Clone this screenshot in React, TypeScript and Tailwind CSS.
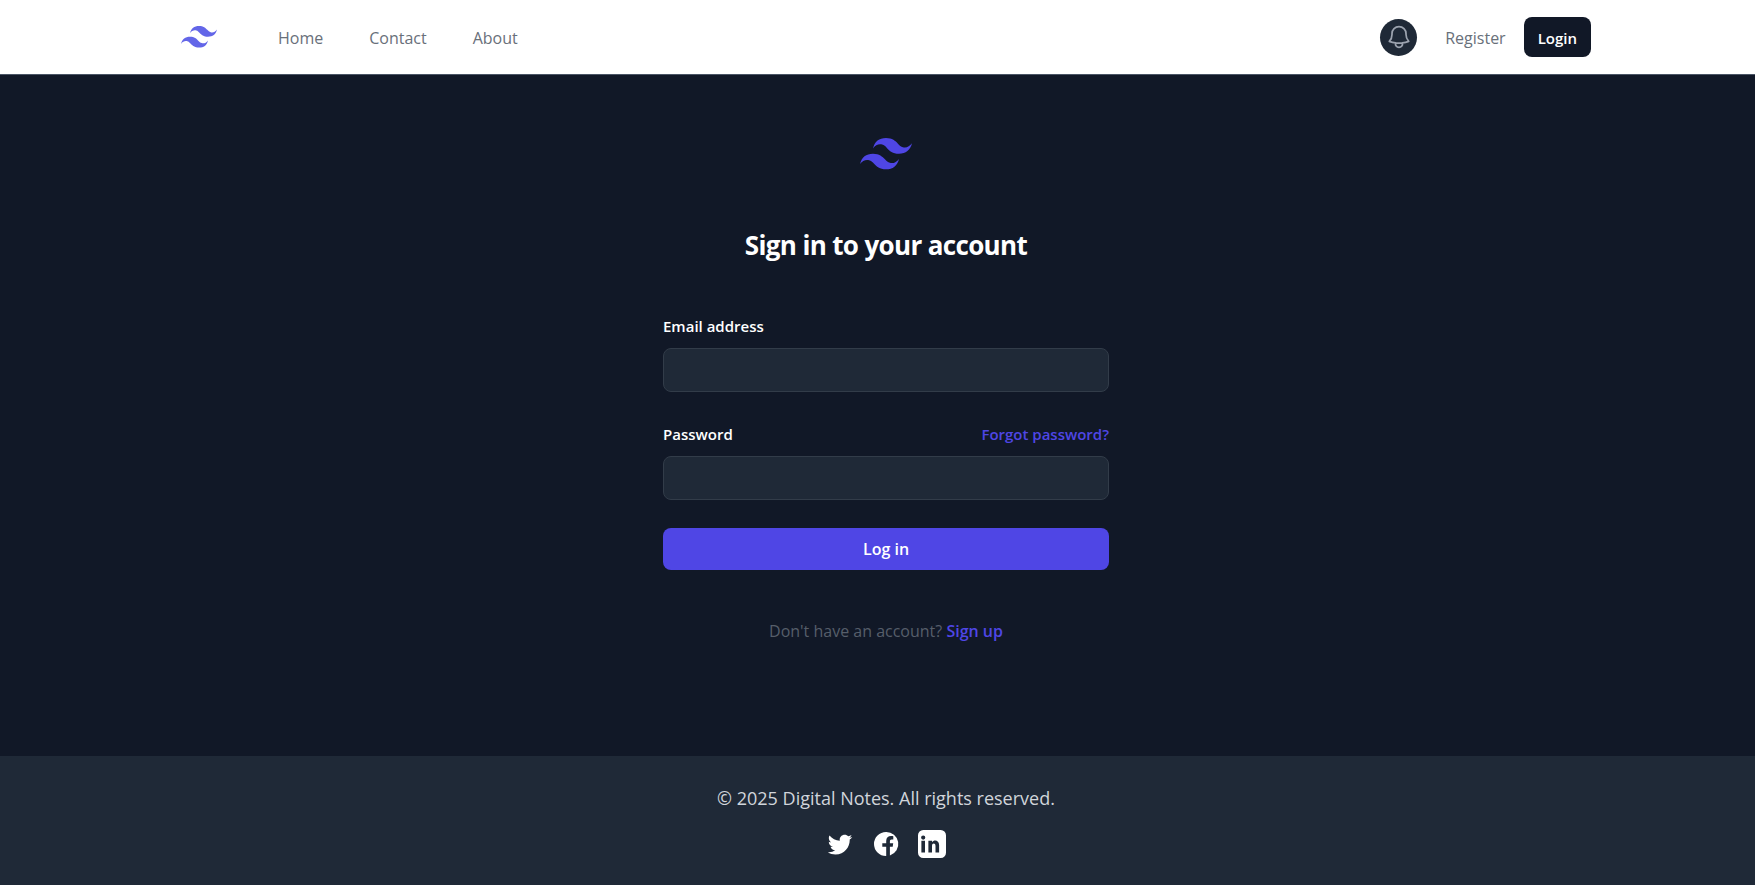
const MARK =
  'M27 0c-7.2 0-11.7 3.6-13.5 10.8 2.7-3.6 5.85-4.95 9.45-4.05 2.054.513 3.522 2.004 5.147 3.653C30.744 13.09 33.808 16.2 40.5 16.2c7.2 0 11.7-3.6 13.5-10.8-2.7 3.6-5.85 4.95-9.45 4.05-2.054-.513-3.522-2.004-5.147-3.653C36.756 3.11 33.692 0 27 0zM13.5 16.2C6.3 16.2 1.8 19.8 0 27c2.7-3.6 5.85-4.95 9.45-4.05 2.054.514 3.522 2.004 5.147 3.653C17.244 29.29 20.308 32.4 27 32.4c7.2 0 11.7-3.6 13.5-10.8-2.7 3.6-5.85 4.95-9.45 4.05-2.054-.513-3.522-2.004-5.147-3.653C23.256 19.31 20.192 16.2 13.5 16.2z';

function Mark({ className }: { className: string }) {
  return (
    <svg viewBox="0 0 54 33" fill="currentColor" className={className} aria-hidden="true">
      <path fillRule="evenodd" clipRule="evenodd" d={MARK} />
    </svg>
  );
}

function Header() {
  return (
    <header className="border-b border-gray-600 bg-white pl-[17px]">
      <div className="mx-auto flex h-[74px] max-w-[1410px] items-center justify-between">
        <div className="flex items-center gap-[61px]">
          <a href="#" aria-label="Digital Notes">
            <Mark className="h-[22px] w-9 text-[#6366e8]" />
          </a>
          <nav className="flex gap-[46px] pt-0.5 text-base text-[#69707a]">
            <a href="#">Home</a>
            <a href="#">Contact</a>
            <a href="#">About</a>
          </nav>
        </div>
        <div className="flex items-center text-base">
          <button
            type="button"
            aria-label="View notifications"
            className="mr-7 flex size-[37px] items-center justify-center rounded-full bg-[#1f2937] text-[#9ca3af]"
          >
            <svg viewBox="0 0 24 24" fill="none" stroke="currentColor" strokeWidth="1.5" strokeLinecap="round" strokeLinejoin="round" className="size-7" aria-hidden="true">
              <path d="M14.857 17.082a23.848 23.848 0 0 0 5.454-1.31A8.967 8.967 0 0 1 18 9.75V9A6 6 0 0 0 6 9v.75a8.967 8.967 0 0 1-2.312 6.022c1.733.64 3.56 1.085 5.455 1.31m5.714 0a24.255 24.255 0 0 1-5.714 0m5.714 0a3 3 0 1 1-5.714 0" />
            </svg>
          </button>
          <a href="#" className="mr-[18px] pt-0.5 text-[#69707a]">Register</a>
          <a href="#" className="flex h-10 items-center rounded-lg bg-[#111827] px-[14px] pt-0.5 text-[15px] font-semibold text-white">Login</a>
        </div>
      </div>
    </header>
  );
}

const field = 'mt-2 block h-11 w-full rounded-lg border border-[#323c49] bg-[#1f2937] px-3 text-base text-white outline-none focus:border-indigo-500';

function SignIn() {
  return (
    <main className="flex grow flex-col items-center pt-[63px] pl-[17px]">
      <Mark className="h-8 w-[52px] text-[#4f46e5]" />
      <h1 className="mt-[55px] text-[26px] leading-10 font-bold tracking-tight text-white">Sign in to your account</h1>
      <form className="mt-[47px] w-full max-w-[446px]" onSubmit={(e) => e.preventDefault()}>
        <label htmlFor="email" className="block text-[15px] leading-7 font-semibold text-white">Email address</label>
        <input id="email" type="email" className={field} />
        <div className="mt-7 flex items-center justify-between text-[15px] leading-7 font-semibold">
          <label htmlFor="password" className="text-white">Password</label>
          <a href="#" className="text-[#4f46e5]">Forgot password?</a>
        </div>
        <input id="password" type="password" className={field} />
        <button type="submit" className="mt-7 h-[42px] w-full rounded-lg bg-[#4f46e5] text-base font-semibold text-white">Log in</button>
      </form>
      <p className="mt-[47px] text-base leading-7 text-[#565e6a]">
        Don't have an account? <a href="#" className="font-semibold text-[#4f46e5]">Sign up</a>
      </p>
    </main>
  );
}

function Footer() {
  return (
    <footer className="flex h-[129px] flex-col items-center bg-[#1f2937] pt-7 pl-[17px]">
      <p className="text-lg text-[#d1d5db]">© 2025 Digital Notes. All rights reserved.</p>
      <div className="mt-[18px] flex items-center gap-[18px] text-white">
        <a href="#" aria-label="Twitter">
          <svg viewBox="0 0 24 24" fill="currentColor" className="size-7" aria-hidden="true">
            <path d="M22.46 6c-.77.35-1.6.58-2.46.69.88-.53 1.56-1.37 1.88-2.38-.83.5-1.75.85-2.72 1.05C18.37 4.5 17.26 4 16 4c-2.35 0-4.27 1.92-4.27 4.29 0 .34.04.67.11.98C8.28 9.09 5.11 7.38 3 4.79c-.37.63-.58 1.37-.58 2.15 0 1.49.75 2.81 1.91 3.56-.71 0-1.37-.2-1.95-.5v.03c0 2.08 1.48 3.82 3.44 4.21a4.22 4.22 0 0 1-1.93.07 4.28 4.28 0 0 0 4 2.98 8.521 8.521 0 0 1-5.33 1.84c-.34 0-.68-.02-1.02-.06C3.44 20.29 5.7 21 8.12 21 16 21 20.33 14.46 20.33 8.79c0-.19 0-.37-.01-.56.84-.6 1.56-1.36 2.14-2.23z" />
          </svg>
        </a>
        <a href="#" aria-label="Facebook">
          <svg viewBox="-2 -2 28 28" fill="currentColor" className="size-7" aria-hidden="true">
            <path d="M12 0a12 12 0 0 0 0 24h.2v-9.300H8.300v-3.500h3.900V9c0-3.300 1.900-5 4.900-5 .9 0 1.700.1 2.200.2v3.200h-1.500c-1.500 0-1.900.8-1.900 1.900v1.900h3.300l-.5 3.500h-2.800v8.750A12 12 0 0 0 12 0z" />
          </svg>
        </a>
        <a href="#" aria-label="LinkedIn">
          <svg viewBox="0 0 24 24" fill="currentColor" className="size-7" aria-hidden="true">
            <path fillRule="evenodd" d="M4.500 0h15A4.500 4.500 0 0 1 24 4.500v15a4.500 4.500 0 0 1-4.500 4.500h-15A4.500 4.500 0 0 1 0 19.500v-15A4.500 4.500 0 0 1 4.500 0zM2.900 9.200v10H6v-10zM4.450 4.700a1.800 1.800 0 1 0 0 3.600 1.800 1.800 0 0 0 0-3.600zM8.900 9.200v10H12v-5.500c0-2.700 3-2.700 3 0v5.500h3.100v-6.100c0-4.600-4.500-5-6.100-2.500V9.200z" />
          </svg>
        </a>
      </div>
    </footer>
  );
}

export default function App() {
  return (
    <div className="flex min-h-screen flex-col bg-[#111827] font-['Open_Sans','Noto_Sans',sans-serif]">
      <Header />
      <SignIn />
      <Footer />
    </div>
  );
}
